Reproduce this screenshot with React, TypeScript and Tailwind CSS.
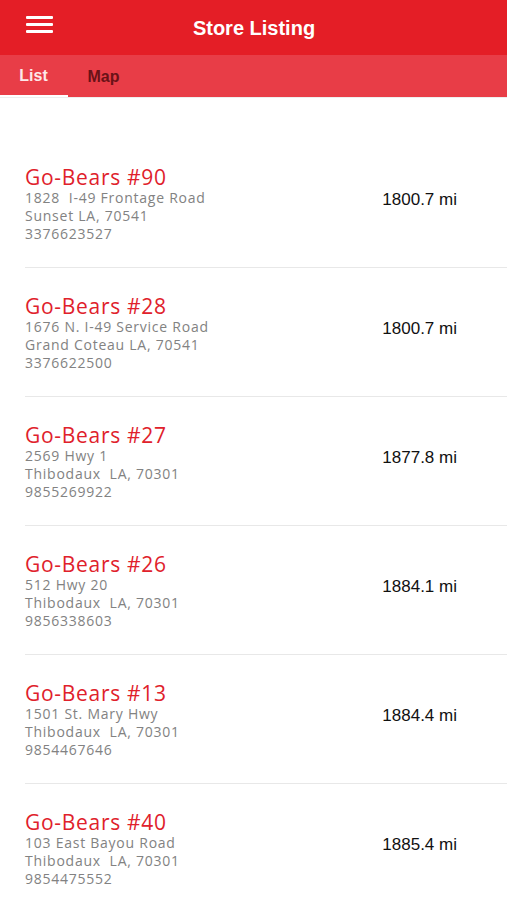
import React from "react";

const stores = [
  { name: "Go-Bears #90", l1: "1828  I-49 Frontage Road", l2: "Sunset LA, 70541", phone: "3376623527", dist: "1800.7 mi" },
  { name: "Go-Bears #28", l1: "1676 N. I-49 Service Road", l2: "Grand Coteau LA, 70541", phone: "3376622500", dist: "1800.7 mi" },
  { name: "Go-Bears #27", l1: "2569 Hwy 1", l2: "Thibodaux  LA, 70301", phone: "9855269922", dist: "1877.8 mi" },
  { name: "Go-Bears #26", l1: "512 Hwy 20", l2: "Thibodaux  LA, 70301", phone: "9856338603", dist: "1884.1 mi" },
  { name: "Go-Bears #13", l1: "1501 St. Mary Hwy", l2: "Thibodaux  LA, 70301", phone: "9854467646", dist: "1884.4 mi" },
  { name: "Go-Bears #40", l1: "103 East Bayou Road", l2: "Thibodaux  LA, 70301", phone: "9854475552", dist: "1885.4 mi" },
];

export default function App() {
  return (
    <div className="w-[507px] h-[900px] overflow-hidden bg-white" style={{ fontFamily: "'Liberation Sans', Arial, sans-serif" }}>
      <div className="h-[55px] bg-[#e41e26] flex items-center relative">
        <div className="absolute left-[26px] top-[16px] w-[27px] flex flex-col gap-[4px]">
          <div className="h-[3px] bg-white rounded-[1px]" />
          <div className="h-[3px] bg-white rounded-[1px]" />
          <div className="h-[3px] bg-white rounded-[1px]" />
        </div>
        <div className="flex-1 text-center text-white font-bold text-[20px] leading-none pl-[1px]">Store Listing</div>
      </div>
      <div className="h-[42px] bg-[#e83d47] flex items-stretch relative">
        <div className="w-[68px] flex items-center justify-center text-[#fde8e9] font-bold text-[16px] border-b-[2px] border-white pr-[1px] pt-[2px]">List</div>
        <div className="w-[72px] flex items-center justify-center text-[#6a1217] font-bold text-[16px] pt-[2px] pr-[1px]">Map</div>
      </div>
      <div className="h-px bg-[#eeeeee]" />
      <div className="pt-[41px]">
        {stores.map((s) => (
          <div key={s.name} className="ml-[25px] border-b border-[#e8e8e8] pt-[26px] pb-[24px] flex">
            <div className="flex-1" style={{ fontFamily: "'Open Sans', sans-serif" }}>
              <div className="text-[#e0212b] text-[21px] font-medium leading-[24px] tracking-[0.7px]">{s.name}</div>
              <div className="text-[#828282] text-[14px] font-medium leading-[18px] tracking-[0.75px] whitespace-pre">{s.l1}</div>
              <div className="text-[#828282] text-[14px] font-medium leading-[18px] tracking-[0.75px] whitespace-pre">{s.l2}</div>
              <div className="text-[#828282] text-[14px] font-medium leading-[18px] tracking-[0.75px]">{s.phone}</div>
            </div>
            <div className="w-[140px] pr-[50px] text-right text-[#111] text-[17px] leading-[20px] pt-[25px]">{s.dist}</div>
          </div>
        ))}
      </div>
    </div>
  );
}
